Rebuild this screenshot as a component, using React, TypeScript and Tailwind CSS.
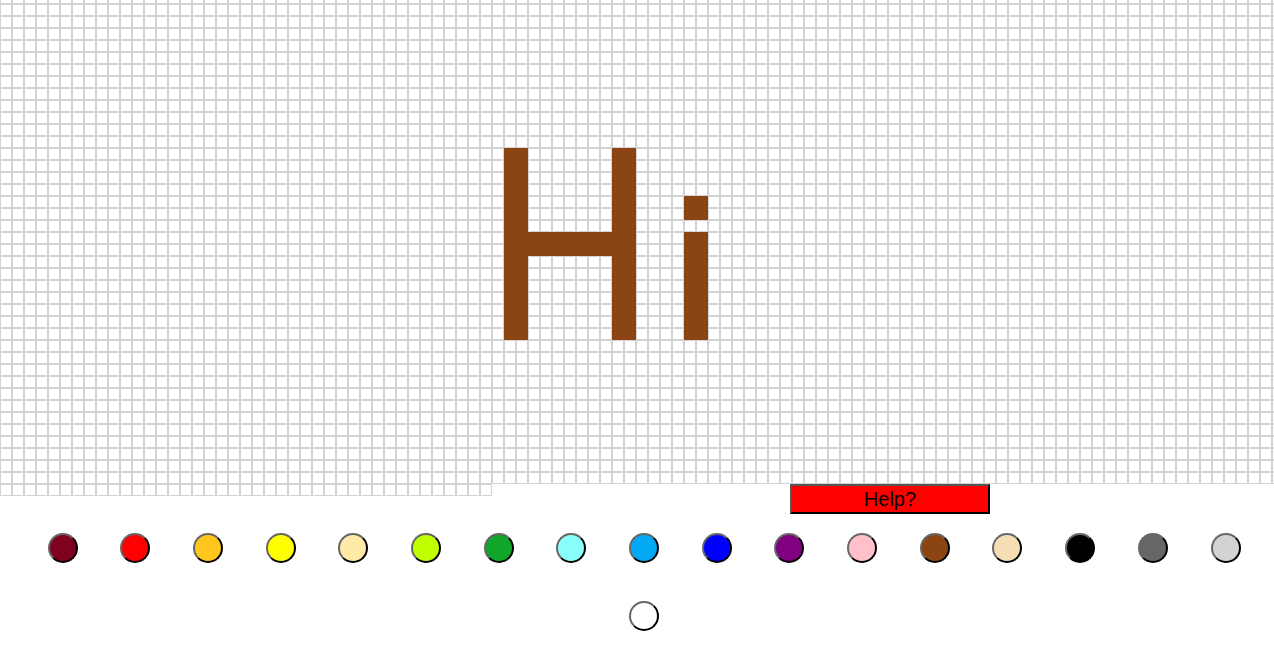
import React from "react";

const COLS = 107;
const FULL_ROWS = 41;
const TAIL = 41;

function isLit(r: number, c: number): boolean {
  if ((c === 42 || c === 43) && r >= 13 && r <= 28) return true;
  if ((c === 51 || c === 52) && r >= 13 && r <= 28) return true;
  if (c >= 44 && c <= 50 && (r === 20 || r === 21)) return true;
  if ((c === 57 || c === 58) && (r === 17 || r === 18)) return true;
  if ((c === 57 || c === 58) && r >= 20 && r <= 28) return true;
  return false;
}

const colors = [
  "#800020",
  "#ff0000",
  "#ffc61e",
  "#ffff00",
  "#ffeaa7",
  "#bfff00",
  "#10a62a",
  "#88fff8",
  "#03a9f4",
  "#0000ff",
  "#800080",
  "#ffc0cb",
  "#8b4513",
  "#f5deb3",
  "#000000",
  "#666666",
  "#d3d3d3",
  "#ffffff",
];

export default function App() {
  const cells: React.ReactNode[] = [];
  const total = FULL_ROWS * COLS + TAIL;
  for (let i = 0; i < total; i++) {
    const r = Math.floor(i / COLS);
    const c = i % COLS;
    const lit = isLit(r, c);
    cells.push(
      <div
        key={i}
        className={
          lit
            ? "w-[12px] h-[12px] shrink-0 border border-[#8b4513] bg-[#8b4513]"
            : "w-[12px] h-[12px] shrink-0 border border-[#d3d3d3] bg-white"
        }
      />
    );
  }

  return (
    <div
      className="w-[1274px] min-h-[649px] bg-white overflow-hidden"
      style={{ fontFamily: '"Liberation Sans", Arial, sans-serif' }}
    >
      <div className="w-full overflow-hidden">
        <div className="w-[1284px] -mt-[8px] flex flex-wrap items-start content-start">
          {cells}
          <button
            type="button"
            className="ml-[298px] w-[200px] h-[30px] shrink-0 bg-[#ff0000] border-2 border-t-[#555] border-l-[#555] border-r-black border-b-black text-black text-[20px] leading-none flex items-center justify-center"
          >
            Help?
          </button>
        </div>
      </div>
      <div className="flex flex-wrap justify-center pl-[14px]">
        {colors.map((col, i) => (
          <div key={i} className="w-[72.7px] py-[19px] flex justify-center">
            <div
              className="w-[30px] h-[30px] rounded-full border-2 border-t-[#666] border-l-[#666] border-r-black border-b-black"
              style={{ backgroundColor: col }}
            />
          </div>
        ))}
      </div>
    </div>
  );
}
